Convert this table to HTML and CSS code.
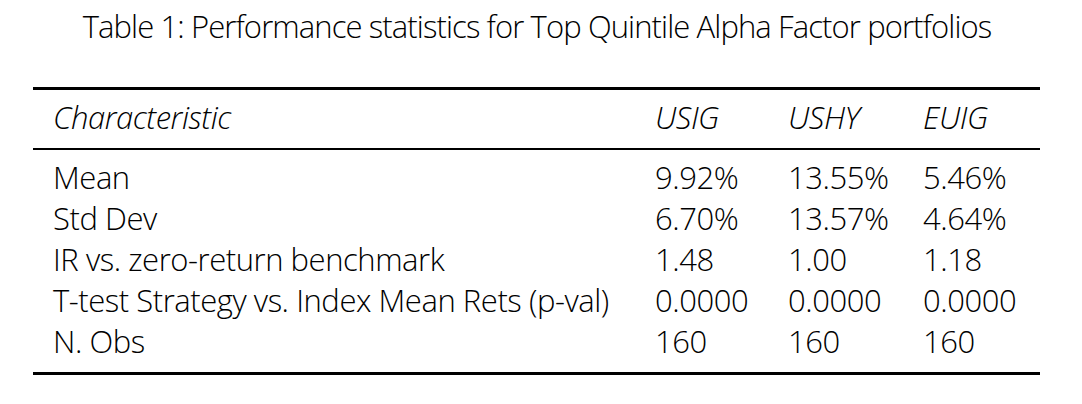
FILE: index.html
```html
<!DOCTYPE html>
<html lang="en">
<head>
<meta charset="utf-8">
<title>Table 1</title>
<link rel="stylesheet" href="styles.css">
</head>
<body>
<div class="page">
  <p class="caption">Table 1: Performance statistics for Top Quintile Alpha Factor portfolios</p>
  <div class="stats">
    <div class="row head">
      <span>Characteristic</span><span>USIG</span><span>USHY</span><span>EUIG</span>
    </div>
    <div class="body">
      <div class="row"><span>Mean</span><span>9.92%</span><span>13.55%</span><span>5.46%</span></div>
      <div class="row"><span>Std Dev</span><span>6.70%</span><span>13.57%</span><span>4.64%</span></div>
      <div class="row"><span>IR vs. zero-return benchmark</span><span>1.48</span><span>1.00</span><span>1.18</span></div>
      <div class="row"><span>T-test Strategy vs. Index Mean Rets (p-val)</span><span>0.0000</span><span>0.0000</span><span>0.0000</span></div>
      <div class="row"><span>N. Obs</span><span>160</span><span>160</span><span>160</span></div>
    </div>
  </div>
</div>
</body>
</html>
```
FILE: styles.css
```css
html, body {
  margin: 0;
  padding: 0;
  background: #fff;
}
.page {
  width: 1082px;
  font-family: "Open Sans", "Noto Sans", sans-serif;
  font-weight: 350;
  font-size: 31px;
  line-height: 41px;
  color: #000;
  letter-spacing: -0.45px;
}
.caption {
  margin: 6px 8px 40px 0;
  text-align: center;
  letter-spacing: -0.9px;
}
.stats {
  width: 1007px;
  margin-left: 33px;
  border-top: 3px solid #000;
  border-bottom: 3px solid #000;
}
.row {
  display: grid;
  grid-template-columns: 602px 133px 135px 1fr;
  padding-left: 20px;
  white-space: nowrap;
}
.head {
  padding-top: 7px;
  padding-bottom: 10px;
  border-bottom: 2px solid #000;
  font-style: italic;
}
.body {
  padding: 7px 0 10px;
}
```
